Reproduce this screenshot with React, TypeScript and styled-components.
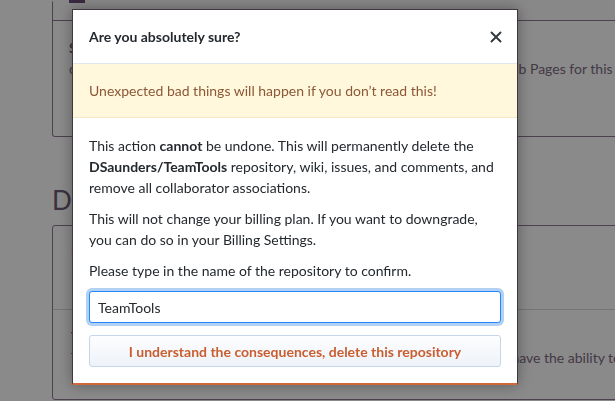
import React, { useEffect, useRef } from 'react';
import styled, { createGlobalStyle } from 'styled-components';

const GlobalStyle = createGlobalStyle`
  html, body {
    margin: 0;
    padding: 0;
  }
  body {
    width: 615px;
    height: 401px;
    overflow: hidden;
    background: #ffffff;
    font-family: Lato, "Open Sans", sans-serif;
    font-size: 14px;
    line-height: 1.5;
    color: #24292e;
  }
`;

// ---- page behind the dialog ----

const Page = styled.div`
  padding-left: 52px;
  width: 720px;
  color: #7e6a82;
`;

const Box = styled.div<{ $top?: boolean }>`
  border: 1px solid #8e7792;
  border-top: ${(p) => (p.$top ? 'none' : '1px solid #8e7792')};
  border-radius: 3px;
`;

const SubRow = styled.div`
  height: 20px;
  background: #fbfbfb;
  border-bottom: 1px solid #8e7792;
`;

const Tab = styled.span`
  display: block;
  margin-left: 16px;
  width: 16px;
  height: 3px;
  background: #6d4c75;
`;

const BoxBody = styled.div<{ $height: number }>`
  height: ${(p) => p.$height}px;
  padding: 16px 16px 0;
  box-sizing: border-box;
`;

const BoxTitle = styled.div`
  font-weight: 700;
  font-size: 14px;
  color: #6f5a73;
`;

const BoxText = styled.div`
  white-space: nowrap;
`;

const DangerHeading = styled.h2`
  margin: 48px 0 10px;
  font-size: 26px;
  font-weight: 400;
  line-height: 30px;
  color: #6f5a73;
`;

const DangerRow = styled.div<{ $first?: boolean }>`
  height: ${(p) => (p.$first ? 83 : 90)}px;
  padding: 16px 18px 0;
  box-sizing: border-box;
  border-top: ${(p) => (p.$first ? 'none' : '1px solid #d6d6d6')};
`;

// ---- dialog ----

const Overlay = styled.div`
  position: fixed;
  inset: 0;
  background: rgba(0, 0, 0, 0.46);
`;

const Dialog = styled.div`
  position: fixed;
  top: 9px;
  left: 72px;
  width: 446px;
  box-sizing: border-box;
  background: #ffffff;
  border: 1px solid #40363f;
  border-bottom: 2px solid #d0683c;
  box-shadow: 0 0 14px rgba(0, 0, 0, 0.35);
`;

const Header = styled.div`
  display: flex;
  align-items: center;
  justify-content: space-between;
  padding: 16px 16px;
  border-bottom: 1px solid #dfe6ee;
`;

const Title = styled.h3`
  margin: 0;
  font-size: 14px;
  font-weight: 700;
  line-height: 21px;
  color: #24292e;
`;

const Close = styled.button`
  display: flex;
  padding: 0;
  margin-right: -1px;
  border: 0;
  background: none;
  color: #33383d;
  cursor: pointer;
`;

const Flash = styled.div`
  padding: 16px;
  background: #fff8dc;
  border-bottom: 1px solid #f5e9c4;
  color: #8c5836;
`;

const Body = styled.div`
  padding: 17px 16px 16px;
`;

const Para = styled.p`
  margin: 0 0 10px;
  line-height: 21px;
`;

const Input = styled.input`
  display: block;
  width: 100%;
  height: 32px;
  box-sizing: border-box;
  margin: 0 0 12px;
  padding: 6px 8px;
  font-family: inherit;
  font-size: 14px;
  color: #24292e;
  background: #fff;
  border: 1px solid #2188ff;
  border-radius: 3px;
  box-shadow: 0 0 0 3px rgba(3, 102, 214, 0.3);
  outline: none;
`;

const DangerButton = styled.button`
  display: block;
  width: 100%;
  height: 32px;
  padding: 0 12px;
  font-family: inherit;
  font-size: 14px;
  font-weight: 700;
  color: #c95e30;
  background: linear-gradient(#fdfdfe, #eef3f9);
  border: 1px solid #c6d6e8;
  border-radius: 3px;
  cursor: pointer;
`;

const CloseIcon = () => (
  <svg width="12" height="12" viewBox="0 0 12 12">
    <path d="M1.5 1.5 L10.5 10.5 M10.5 1.5 L1.5 10.5" stroke="currentColor" strokeWidth="1.9" strokeLinecap="round" />
  </svg>
);

const App: React.FC = () => {
  const inputRef = useRef<HTMLInputElement>(null);

  useEffect(() => {
    const el = inputRef.current;
    if (el) {
      el.focus();
      el.setSelectionRange(el.value.length, el.value.length);
    }
  }, []);

  return (
    <>
      <GlobalStyle />
      <Page>
        <Box $top>
          <SubRow>
            <Tab />
          </SubRow>
          <BoxBody $height={115}>
            <BoxTitle>Source</BoxTitle>
            <BoxText>
              choose a branch to publish a site from the gh-pages branch as your GitHub Pages for this repository.
            </BoxText>
          </BoxBody>
        </Box>
        <DangerHeading>Danger Zone</DangerHeading>
        <Box>
          <DangerRow $first>
            <BoxTitle>Make this repository private</BoxTitle>
            <BoxText>Hide this repository from the public.</BoxText>
          </DangerRow>
          <DangerRow>
            <BoxTitle>Transfer ownership</BoxTitle>
            <BoxText>Transfer this repository to another user or to an organization where you have the ability to create repositories.</BoxText>
          </DangerRow>
        </Box>
      </Page>
      <Overlay />
      <Dialog role="dialog" aria-modal="true">
        <Header>
          <Title>Are you absolutely sure?</Title>
          <Close aria-label="Close dialog">
            <CloseIcon />
          </Close>
        </Header>
        <Flash>Unexpected bad things will happen if you don’t read this!</Flash>
        <Body>
          <Para>
            This action <strong>cannot</strong> be undone. This will permanently delete the{' '}
            <strong>DSaunders/TeamTools</strong> repository, wiki, issues, and comments, and remove all
            collaborator associations.
          </Para>
          <Para>
            This will not change your billing plan. If you want to downgrade, you can do so in your Billing
            Settings.
          </Para>
          <Para>Please type in the name of the repository to confirm.</Para>
          <Input ref={inputRef} type="text" defaultValue="TeamTools" aria-label="Repository name" />
          <DangerButton type="button">I understand the consequences, delete this repository</DangerButton>
        </Body>
      </Dialog>
    </>
  );
};

export default App;
